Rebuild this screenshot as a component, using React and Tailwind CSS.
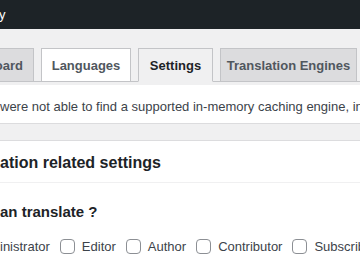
export default function App() {
  const tabs = [
    { label: "board", w: "w-[34px]", cls: "bg-[#dcdcde] text-[#50575e] justify-end pr-[10px] border-l-0" },
    { label: "Languages", w: "w-[90px]", cls: "bg-white text-[#50575e] justify-center" },
    { label: "Settings", w: "w-[75px]", cls: "bg-[#f0f0f1] text-[#1d2327] justify-center border-b-[#f0f0f1]" },
    { label: "Translation Engines", w: "w-[137px]", cls: "bg-[#dcdcde] text-[#50575e] justify-center" },
  ];

  const roles = ["Editor", "Author", "Contributor", "Subscriber"];

  return (
    <div className="w-[360px] h-[270px] overflow-hidden bg-[#f0f0f1] flex flex-col font-['Liberation_Sans',Arial,sans-serif]">
      {/* admin bar */}
      <div className="h-[29px] shrink-0 bg-[#1d2327] flex items-center text-white text-[13px] -ml-[1px]">y</div>

      {/* tabs */}
      <div className="mt-[19px] shrink-0 flex gap-[7px] h-[34px] border-b border-[#c3c4c7] whitespace-nowrap">
        {tabs.map((t) => (
          <div
            key={t.label}
            className={`${t.w} h-[34px] pt-[1px] flex items-center border border-[#c3c4c7] text-[13px] font-bold shrink-0 ${t.cls}`}
          >
            {t.label}
          </div>
        ))}
      </div>

      {/* notice */}
      <div className="mt-[3px] shrink-0 h-[39px] pt-[5px] bg-white border-b border-[#dcdcde] flex items-center text-[13px] text-[#3c434a] whitespace-nowrap">
        were not able to find a supported in-memory caching engine, install
      </div>

      {/* settings panel */}
      <div className="mt-[16px] flex-1 bg-white border-t border-[#dcdcde] whitespace-nowrap">
        <div className="h-[42px] pt-[3px] flex items-center border-b border-[#f0f0f1] text-[16px] font-bold text-[#1d2327]">
          ation related settings
        </div>
        <div className="pt-[18px] text-[15px] font-bold text-[#1d2327] leading-[22px]">an translate ?</div>
        <div className="mt-[14px] flex items-center gap-[10px] text-[13px] text-[#3c434a]">
          <span>inistrator</span>
          {roles.map((r) => (
            <label key={r} className="flex items-center gap-[7px] shrink-0">
              <span className="w-[15px] h-[15px] rounded-[4px] border border-[#8c8f94] bg-white shrink-0" />
              <span>{r}</span>
            </label>
          ))}
        </div>
      </div>
    </div>
  );
}
